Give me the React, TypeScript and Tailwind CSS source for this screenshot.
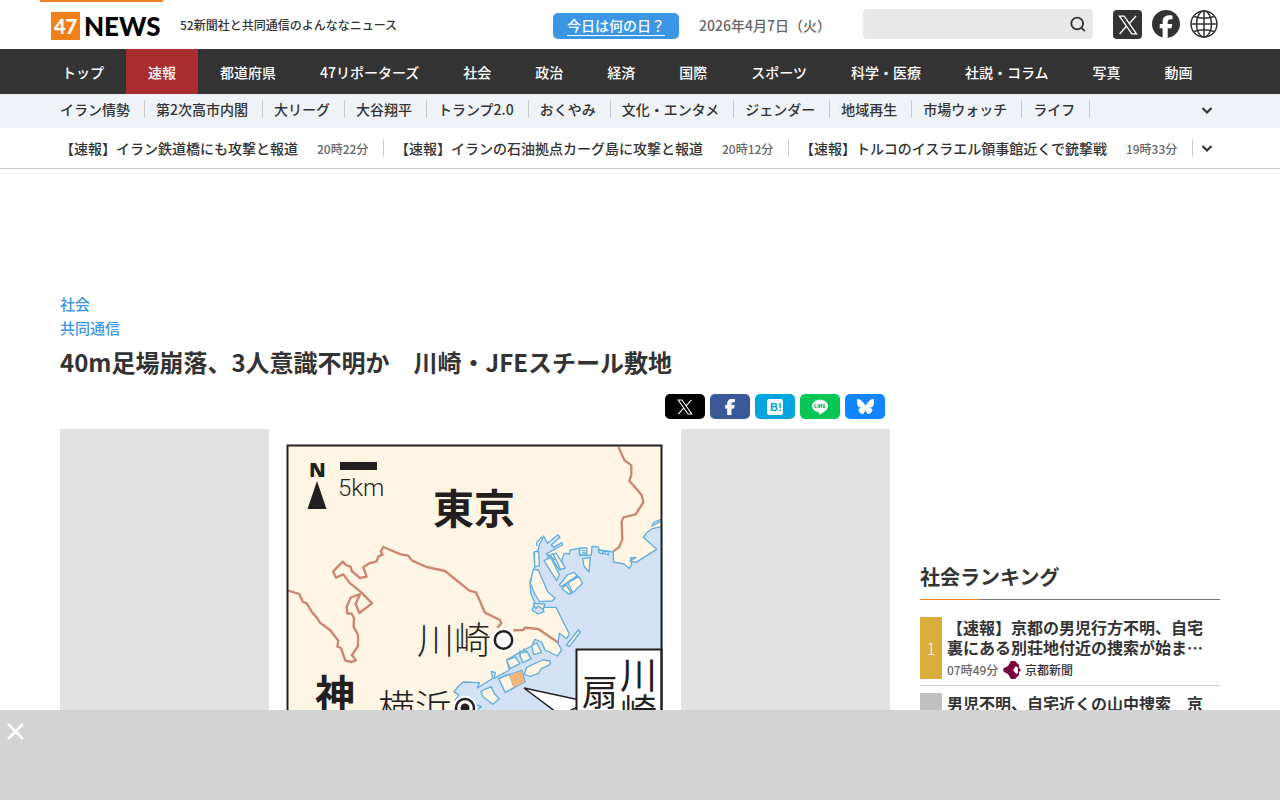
import { useState } from 'react'
import { FaBluesky, FaFacebook, FaFacebookF } from 'react-icons/fa6'

interface Flash {
  title: string
  time: string
}

const NAV_ITEMS = [
  'トップ',
  '速報',
  '都道府県',
  '47リポーターズ',
  '社会',
  '政治',
  '経済',
  '国際',
  'スポーツ',
  '科学・医療',
  '社説・コラム',
  '写真',
  '動画',
]

const TOPICS = [
  'イラン情勢',
  '第2次高市内閣',
  '大リーグ',
  '大谷翔平',
  'トランプ2.0',
  'おくやみ',
  '文化・エンタメ',
  'ジェンダー',
  '地域再生',
  '市場ウォッチ',
  'ライフ',
]

const FLASHES: Flash[] = [
  { title: '【速報】イラン鉄道橋にも攻撃と報道', time: '20時22分' },
  { title: '【速報】イランの石油拠点カーグ島に攻撃と報道', time: '20時12分' },
  { title: '【速報】トルコのイスラエル領事館近くで銃撃戦', time: '19時33分' },
]

function Chevron() {
  return (
    <svg className="h-3 w-3" viewBox="0 0 12 12" fill="none" stroke="#333" strokeWidth={2.2}>
      <path d="M1.5 4 6 8.500l4.500-4.500" />
    </svg>
  )
}

function XIcon({ className }: { className: string }) {
  return (
    <svg className={className} viewBox="0 0 20 20" fill="none" stroke="#fff" strokeWidth={1.3}>
      <path d="M1.500 1.200h4.700l12.300 17.600h-4.700ZM18 1 11.200 8.800M1.600 19l7-8" />
    </svg>
  )
}

function GlobeIcon() {
  return (
    <svg className="h-7 w-7" viewBox="0 0 28 28" fill="none" stroke="#333" strokeWidth={1.5}>
      <circle cx="14" cy="14" r="13" />
      <ellipse cx="14" cy="14" rx="7.500" ry="13" />
      <path d="M14 1v26M1 14h26M4 6.500c6 2 14 2 20 0M4 21.500c6-2 14-2 20 0" />
    </svg>
  )
}

function Header() {
  const [keyword, setKeyword] = useState('')

  return (
    <header className="mx-auto flex h-[49px] w-full max-w-[1200px] shrink-0 items-start pr-[22px]">
      <a href="#" aria-label="47NEWS" className="flex w-[123px] gap-1 border-t-2 border-[#f58220] pt-[10px] pl-[11px]">
        <span className="flex h-7 w-[29px] shrink-0 items-center justify-center bg-[#f08019] font-['Lato',sans-serif] text-xl leading-7 font-black text-white">
          47
        </span>
        <span className="font-['Lato',sans-serif] text-[26px] leading-7 font-black text-black">NEWS</span>
      </a>
      <p className="mt-4 ml-[17px] text-xs leading-[18px]">52新聞社と共同通信のよんななニュース</p>
      <a href="#" className="mt-[13px] ml-auto h-[26px] rounded-[5px] bg-[#3c96e6] px-[14px] pt-[2px] text-sm text-white">
        <span className="block h-[21px] border-b border-white leading-[21px]">今日は何の日？</span>
      </a>
      <p className="mt-[15px] ml-5 w-[144px] text-sm leading-5 text-[#666]">2026年4月7日（火）</p>
      <form
        className="mt-[9px] ml-5 flex h-[30px] w-[230px] items-center rounded-[3px] bg-[#e9e9e9]"
        onSubmit={(e) => e.preventDefault()}
      >
        <input
          type="text"
          aria-label="検索"
          value={keyword}
          onChange={(e) => setKeyword(e.target.value)}
          className="min-w-0 flex-1 bg-transparent px-2 text-sm outline-none"
        />
        <button type="submit" aria-label="検索する" className="mr-[7px]">
          <svg className="h-4 w-4" viewBox="0 0 16 16" fill="none" stroke="#333" strokeWidth={1.8}>
            <circle cx="7.200" cy="7.500" r="5.900" />
            <path d="m11.300 11.700 3.500 3.500" />
          </svg>
        </button>
      </form>
      <div className="mt-[10px] ml-5 flex gap-[10px] text-[#333]">
        <a href="#" aria-label="X" className="flex h-[29px] w-[29px] items-center justify-center rounded bg-[#333]">
          <XIcon className="h-5 w-5" />
        </a>
        <a href="#" aria-label="Facebook">
          <FaFacebook className="h-7 w-7" />
        </a>
        <a href="#" aria-label="Language">
          <GlobeIcon />
        </a>
      </div>
    </header>
  )
}

function MainNav() {
  return (
    <nav className="shrink-0 bg-[#333] text-white">
      <ul className="mx-auto flex max-w-[1200px]">
        {NAV_ITEMS.map((item) => (
          <li key={item}>
            <a
              href="#"
              className={`block h-[45px] px-[22px] text-sm leading-[46px] whitespace-nowrap ${item === '速報' ? 'bg-[#aa2e2f]' : ''}`}
            >
              {item}
            </a>
          </li>
        ))}
      </ul>
    </nav>
  )
}

function TopicBar() {
  return (
    <div className="shrink-0 bg-[#eff3f8]">
      <div className="mx-auto flex h-[34px] max-w-[1200px] items-start px-5 pt-[6px]">
        <ul className="flex gap-[11px]">
          {TOPICS.map((topic) => (
            <li key={topic} className="h-[18px] border-r border-[#ccc] pr-[14px] text-sm leading-[18px] whitespace-nowrap">
              <a href="#">{topic}</a>
            </li>
          ))}
        </ul>
        <button type="button" aria-label="トピックを開く" className="mt-1 mr-[7px] ml-auto">
          <Chevron />
        </button>
      </div>
    </div>
  )
}

function FlashBar() {
  return (
    <div className="shrink-0 border-b border-[#ccc]">
      <div className="mx-auto flex h-10 max-w-[1200px] items-center px-5">
        <ul className="flex gap-[11px]">
          {FLASHES.map((flash) => (
            <li key={flash.title} className="flex h-[18px] items-center border-r border-[#ccc] pr-[14px] whitespace-nowrap">
              <a href="#" className="text-sm">
                {flash.title}
              </a>
              <time className="ml-[19px] w-[52px] pt-[2px] text-xs text-[#666]">{flash.time}</time>
            </li>
          ))}
        </ul>
        <button type="button" aria-label="速報を開く" className="mr-[7px] ml-auto">
          <Chevron />
        </button>
      </div>
    </div>
  )
}

function ShareButtons() {
  const base = 'flex h-[25px] w-10 items-center justify-center rounded-[5px] text-white'

  return (
    <div className="mt-[14px] flex justify-end gap-[5px] pr-[5px]">
      <button type="button" aria-label="Xでシェア" className={`${base} bg-black`}>
        <XIcon className="h-4 w-4" />
      </button>
      <button type="button" aria-label="Facebookでシェア" className={`${base} bg-[#3b5998]`}>
        <FaFacebookF className="h-4 w-4" stroke="#fff" strokeWidth={20} />
      </button>
      <button type="button" aria-label="はてなブックマークに追加" className={`${base} bg-[#00a4de]`}>
        <svg className="h-4 w-4" viewBox="0 0 16 16">
          <rect width="16" height="16" rx="2.500" fill="#fff" />
          <text x="3" y="12" fill="#00a4de" fontSize="11" fontWeight="700" fontFamily="'Liberation Sans', sans-serif">
            B!
          </text>
        </svg>
      </button>
      <button type="button" aria-label="LINEで送る" className={`${base} bg-[#06c755]`}>
        <svg className="h-4 w-4" viewBox="0 0 16 16">
          <path fill="#fff" d="M8 .8C3.600.8 0 3.500 0 7c0 3.100 2.900 5.700 6.800 6.200.8.200.5 1 .4 2 0 .4.200.6.800.3C10.500 14.300 16 11 16 7 16 3.500 12.400.8 8 .8Z" />
          <path fill="none" stroke="#06c755" strokeWidth="1" d="M3 5v3.500h1.700M6 5v4M7.500 9V5.200l2 3.300V5M13 5.500h-1.800v3H13M11.200 7H13" />
        </svg>
      </button>
      <button type="button" aria-label="Blueskyでシェア" className={`${base} bg-[#1185fe]`}>
        <FaBluesky className="h-[17px] w-[17px]" />
      </button>
    </div>
  )
}

// Locator map of the Tokyo Bay coast
function LocatorMap() {
  return (
    <svg
      role="img"
      aria-label="川崎市川崎区扇島の地図"
      className="h-[300px] w-[412px] bg-white"
      viewBox="269 429 412 300"
      fontFamily="'Noto Sans CJK JP', sans-serif"
      fill="#231f20"
    >
      <rect x="287.500" y="445.500" width="374" height="340" fill="#fff5e4" />
      <g transform="translate(470 430) scale(0.33333)" strokeLinejoin="round">
        <g fill="#d3e2f5" stroke="#62aedd" strokeWidth="4">
          <path d="M575 290 546 296 530 308 520 322 560 358 498 397 480 393 498 382 482 383 485 404 478 415 462 402 430 396 430 366 388 360 385 351 366 349 364 375 328 376 328 355 300 360 298 372 282 370 275 392 283 412 268 420 250 392 242 378 228 372 246 362 278 345 276 338 250 352 244 345 270 322 264 314 232 340 221 318 208 345 204 362 192 368 194 410 180 455 182 490 195 520 186 541 205 552 222 545 217 532 258 532 298 612 290 626 268 610 264 640 275 660 262 678 225 660 215 636 195 628 185 648 148 668 110 690 118 720 72 745 76 728 64 724 68 745 22 774 28 758-20 756-34 768-48 785-34 795-44 810-20 845-20 920H575Z" />
          <path d="m573 268-20 8-8 12 28-14" />
        </g>
        <g fill="#fff5e4" stroke="#62aedd" strokeWidth="4">
          <path d="m190 418 15 2 28 65 22 20-8 8-38 2-16-25-12-30Z" />
          <path d="M193 365h13l2 42-14 3Z" />
          <path d="m222 392 20-10 26 52-8 18Z" />
          <path d="m250 374 8-5 28 45-14 5Z" />
          <path d="m268 465 24-30 20-8 10 10-48 33ZM326 440l12 20-30 28-14-30ZM276 476l12-12 16 26-8 2Z" />
          <path d="m338 386 23-3-4 43-15-18Z" />
          <path d="M330 354h21l-1 21h-21ZM335 362h12M336 369h12" />
          <path d="m385 360 12 2 2 10-12-4ZM402 363l12 2 2 10-10-4Z" />
          <path d="m289 645 36-45 6 6-33 44Z" />
          <path d="m190 520 34 2-4 16-15-10-8 8Z" />
          <path d="m110 690 26-9 14 20-30 15ZM148 670l22-6 14 22-26 12ZM185 646l16-7 13 28-23 7Z" />
          <path d="m170 712 48-22 22 3v11l-26 12-9 15-24 8-18-6Z" />
          <path d="m86 746 32-14 14 40-26 16Z" />
          <path d="m32 784 32-14 8 20 16 16-20 17-28-22Z" />
        </g>
        <path d="m118 738 38-18 10 34-34 22Z" fill="#f6b47b" />
        <path d="m86 746 70-26 10 36-60 32Z" fill="none" stroke="#62aedd" strokeWidth="3" />
        <path d="M200 348v-10l16-18M230 372l26 18M232 382l18-12M150 660v22M160 655l10 14M20 825l14 5-10 8" fill="none" stroke="#62aedd" strokeWidth="4" />
        <g fill="none" stroke="#ca8672" strokeWidth="7">
          <path d="m445 50 18 40 21 16v29l-6 17 37 43 5 22-23 36-37 9-5 13 2 53-10 24-17 12" />
          <path d="m130 601 30-1 5-7 40 4 60 41" />
          <path d="m-546 482 34 10 10 23 12 5 17 28 13 14 10 16 30 22 25 32-3 18 11 4 13 38 19 4 13-5-12-16 18-27v-33l-13-25 1-25-7-14h-13l-2-21 12-27 28-11-13 30 11 27 38-29-31-32-37-30-18-25-22 10-9-18 29-30 12 12 12 3 3 13 25 21 20-4-10-28 18-12 22-6 5-14 13-6-6-9 8-14 52 22 23 4 11 15 44 19 55 12 73 59 20 5 27 61 45 22 4 10-12 13" />
        </g>
      </g>
      <path d="M524 688 589 702 560 715Z" fill="#fff" stroke="#231f20" strokeWidth="1.500" />
      <circle cx="503.500" cy="640" r="12" fill="#fff" />
      <circle cx="503.500" cy="640" r="8.700" fill="#fff" stroke="#231f20" strokeWidth="2.500" />
      <circle cx="465" cy="708" r="12" fill="#fff" />
      <circle cx="465" cy="708" r="9" fill="#fff" stroke="#231f20" strokeWidth="2.500" />
      <circle cx="465" cy="708" r="4.500" />
      <rect x="576.500" y="649.500" width="85" height="140" fill="#fff" stroke="#231f20" strokeWidth="2" />
      <rect x="287.500" y="445.500" width="374" height="340" fill="none" stroke="#231f20" strokeWidth="2" />
      <path d="M340 462h37v8h-37ZM317 481l9.500 28h-19Z" />
      <text x="309" y="477" fontSize="20" fontWeight="800" fontFamily="'Open Sans', sans-serif">N</text>
      <text x="338" y="496" fontSize="24" fontWeight="300" fontFamily="'Roboto', sans-serif">5km</text>
      <text x="433" y="524" fontSize="41" fontWeight="700">東京</text>
      <text x="417" y="654" fontSize="37" fontWeight="300">川崎</text>
      <text x="378" y="722" fontSize="37" fontWeight="300">横浜</text>
      <text x="315" y="709" fontSize="40" fontWeight="700">神</text>
      <text x="620" y="689" fontSize="37" fontWeight="400">川</text>
      <text x="620" y="726" fontSize="37" fontWeight="400">崎</text>
      <text x="582" y="706" fontSize="36" fontWeight="400">扇</text>
    </svg>
  )
}

function Article() {
  return (
    <article className="min-w-0 flex-1">
      <div className="flex flex-col text-[15px] leading-6 text-[#3c96e6]">
        <a href="#">社会</a>
        <a href="#">共同通信</a>
      </div>
      <h1 className="mt-1 text-2xl leading-9 font-bold">40m足場崩落、3人意識不明か　川崎・JFEスチール敷地</h1>
      <ShareButtons />
      <div className="mt-[10px] flex justify-center bg-[#e2e2e2]">
        <LocatorMap />
      </div>
    </article>
  )
}

function Ranking() {
  return (
    <aside className="w-[300px] shrink-0 pt-[270px]">
      <h2 className="text-xl leading-[30px] font-bold">社会ランキング</h2>
      <div className="mt-[7px] flex h-px bg-[#777]">
        <span className="w-[59px] bg-[#f58220]" />
      </div>
      <ol className="mt-[17px]">
        <li className="flex gap-[5px] border-b border-[#ccc] pb-[6px]">
          <span className="flex w-[22px] items-center justify-center bg-[#dbae3c] font-light text-white">1</span>
          <a href="#" className="flex-1">
            <p className="line-clamp-2 pr-2 text-base leading-5 font-bold">
              【速報】京都の男児行方不明、自宅裏にある別荘地付近の捜索が始ま…
            </p>
            <div className="mt-1 flex h-[18px] items-center text-xs">
              <time className="w-14 text-[#666]">07時49分</time>
              <svg className="mr-[2px] h-5 w-5" viewBox="0 0 20 20">
                <path d="M8 1h4l4 4v3l2 2-2 2v3l-4 4H8l-3-5-4-2-1-2 1-2 4-2Z" fill="#7d003d" />
                <path d="m13 6 2 2v5l-2 1-3-4Z" fill="#fff" />
              </svg>
              <span>京都新聞</span>
            </div>
          </a>
        </li>
        <li className="mt-[7px] flex gap-[5px]">
          <span className="w-[22px] bg-[#c0c0c2]" />
          <a href="#" className="flex-1 text-base leading-5 font-bold">
            男児不明、自宅近くの山中捜索　京
          </a>
        </li>
      </ol>
    </aside>
  )
}

export default function App() {
  const [showBanner, setShowBanner] = useState(true)

  return (
    <div className="flex h-screen flex-col overflow-hidden bg-white font-['Noto_Sans_CJK_JP',sans-serif] font-medium text-[#333]">
      <Header />
      <MainNav />
      <TopicBar />
      <FlashBar />
      <main className="mx-auto flex min-h-0 w-full max-w-[1200px] flex-1 gap-[30px] overflow-hidden px-5 pt-[123px]">
        <Article />
        <Ranking />
      </main>

      {/* Ad banner */}
      {showBanner && (
        <div className="h-[90px] shrink-0 bg-[#d3d3d3] pt-[11px] pl-[5px]">
          <button type="button" aria-label="閉じる" onClick={() => setShowBanner(false)} className="block">
            <svg className="h-5 w-5" viewBox="0 0 20 20" stroke="#fff" strokeWidth={2.5}>
              <path d="m3 3 15 15M18 3 3 18" />
            </svg>
          </button>
        </div>
      )}
    </div>
  )
}
